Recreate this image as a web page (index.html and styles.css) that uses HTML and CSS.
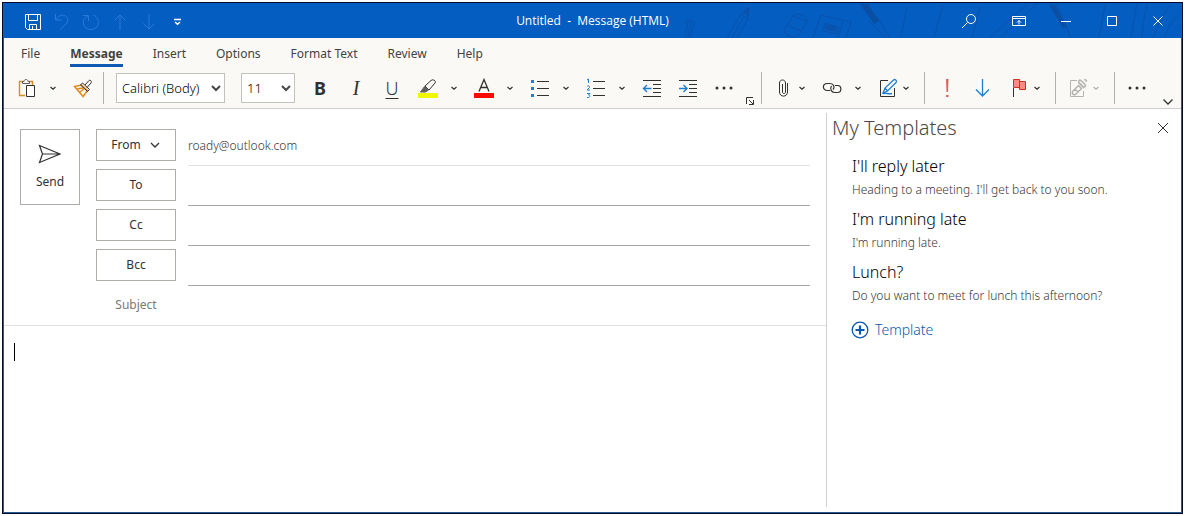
FILE: index.html
```html
<!DOCTYPE html>
<html lang="en">
<head>
<meta charset="utf-8">
<title>Untitled - Message (HTML)</title>
<link rel="stylesheet" href="styles.css">
</head>
<body>
<svg class="defs" aria-hidden="true">
  <symbol id="chev" viewBox="0 0 16 16"><path d="M5.500 7l2.500 2.200L10.500 7" fill="none" stroke="currentColor" stroke-width="1.200"/></symbol>
</svg>
<div class="window">
  <header class="titlebar">
    <svg class="deco" viewBox="0 0 500 35" width="500" height="35" aria-hidden="true">
      <g fill="none" stroke="#0a52ac" stroke-width="1">
        <path d="M3 20l5-3 6 2M7 18l-3 17M10 19l-3 16M13 20l-4 15"/>
        <path d="M46 35l14-24 8-7-1 12-11 19M60 11l7 5M51 35l12-22"/><path d="M63 9l5-5-1 9z" fill="#0a52ac"/>
        <path d="M103 27l9-14 14 5-8 14c-4 4-16 1-15-5zM112 13c4-4 14-1 14 5M107 22l13 6"/>
        <path d="M132 35l8-23 30 7-5 16M162 18l-5 17M144 20l14 4-2 7-14-3z"/><path d="M145 22l10 2-1 4-10-2z" fill="#0a52ac"/>
        <path d="M188 18l16 17M196 14l13 21"/><path d="M179 1h8l11 17-5 3z" fill="#0a4fa4" stroke="none"/>
        <path d="M226 3l-6 32M262 2l-9 33M299 4l-8 31M345 2c-12 12-28 24-36 33M356 0c-12 14-28 25-36 35M375 0l15 35M370 0l12 25M424 2l-6 33M456 0l-6 35M466 1c-2 8-4 20-5 34M490 2c-10 12-14 23-18 33M498 12c-8 6-12 14-14 23"/>
        <path d="M368 2h6l12 22-4 1z" fill="#0a4fa4" stroke="none"/>
      </g>
    </svg>
    <div class="quick">
      <button class="tb" aria-label="Save"><svg width="18" height="18" viewBox="0 0 18 18"><path d="M1.500 1.500h15v15h-13l-2-2zM4.500 1.500v6h9v-6M5.500 16.500v-5h7v5M8.500 13v3" /></svg></button>
      <button class="tb dim" aria-label="Undo"><svg width="18" height="18" viewBox="0 0 18 18"><path d="M2.500 1v6h6M3 6.500C6 2 10 1 13 3.500c3 3 2 6-1 8.500l-5 4.500"/></svg></button>
      <button class="tb dim" aria-label="Redo"><svg width="18" height="18" viewBox="0 0 18 18"><path d="M1 2.500h5.500v5.500M6 3C1 5 0 10 3 14c4 4 10 3 12.500-1 2-4 .5-9-4-11"/></svg></button>
      <button class="tb dim" aria-label="Previous item"><svg width="18" height="18" viewBox="0 0 18 18"><path d="M9 17V2M3.500 7.500L9 2l5.500 5.500"/></svg></button>
      <button class="tb dim" aria-label="Next item"><svg width="18" height="18" viewBox="0 0 18 18"><path d="M9 1v15M3.500 10.500L9 16l5.500-5.500"/></svg></button>
      <button class="tb" aria-label="Customize toolbar"><svg width="18" height="18" viewBox="0 0 18 18"><path d="M5 6.500h7M6 9l2.500 2.300L11 9" stroke-width="1.400"/></svg></button>
    </div>
    <h1 class="caption">Untitled&nbsp; -&nbsp; Message (HTML)</h1>
    <div class="controls">
      <button class="wc search" aria-label="Search"><svg width="18" height="18" viewBox="0 0 18 18"><circle cx="11" cy="7" r="4.500"/><path d="M7.500 10.500L2 16"/></svg></button>
      <button class="wc display" aria-label="Ribbon display options"><svg width="18" height="18" viewBox="0 0 18 18"><path d="M2.500 4.500h13v9h-13zM2.500 6.500h13M9 12.500v-4M7 10.500l2-2 2 2"/></svg></button>
      <button class="wc" aria-label="Minimize"><svg width="18" height="18" viewBox="0 0 18 18"><path d="M4 9.500h10"/></svg></button>
      <button class="wc" aria-label="Maximize"><svg width="18" height="18" viewBox="0 0 18 18"><path d="M4.500 4.500h9v9h-9z"/></svg></button>
      <button class="wc" aria-label="Close"><svg width="18" height="18" viewBox="0 0 18 18"><path d="M4.500 4.500l9 9M13.500 4.500l-9 9"/></svg></button>
    </div>
  </header>

  <div class="ribbon">
    <nav class="tabs">
      <a href="#file">File</a>
      <a href="#message" class="active" aria-current="page">Message</a>
      <a href="#insert">Insert</a>
      <a href="#options">Options</a>
      <a href="#format">Format Text</a>
      <a href="#review">Review</a>
      <a href="#help">Help</a>
    </nav>
    <div class="toolbar" role="toolbar" aria-label="Message tools">
      <div class="group clipboard">
        <button class="tool slim" aria-label="Paste"><svg width="20" height="20" viewBox="0 0 20 20"><path d="M8 17.500H2.500v-14H6M12 3.500h3.500V7" stroke="#e08a1e" stroke-width="1.400"/><path d="M5.500 5.500v-2H7C7 .8 11 .8 11 3.500h1.500v2z" stroke="#605e5c"/><path d="M9.500 7.500h8v11h-8z" fill="#fff"/></svg></button>
        <button class="drop" aria-label="Paste options"><svg width="16" height="16"><use href="#chev"/></svg></button>
        <button class="tool slim" aria-label="Format painter"><svg width="20" height="20" viewBox="0 0 20 20"><path d="M1.500 8.500l7-1.500 6 5.500-4.500 6zM4 11l6-1M7 14l4-3" stroke="#e08a1e" stroke-width="1.500"/><path d="M7.500 7l2-2 7 6.500-2 2zM12 7l4-4.500c1-1 3.500 1 2 2.500l-4 4.500"/></svg></button>
      </div>
      <span class="sep"></span>
      <div class="group fonts">
        <span class="pick family"><select aria-label="Font"><option>Calibri (Body)</option></select><svg width="12" height="12" viewBox="0 0 12 12"><path d="M2 4l4 4 4-4"/></svg></span>
        <span class="pick size"><select aria-label="Font size"><option>11</option></select><svg width="12" height="12" viewBox="0 0 12 12"><path d="M2 4l4 4 4-4"/></svg></span>
      </div>
      <div class="group">
        <button class="tool letter bold">B</button>
        <button class="tool letter italic">I</button>
        <button class="tool letter under">U</button>
        <button class="tool" aria-label="Highlight"><svg width="20" height="20" viewBox="0 0 20 20"><path d="M0 15h20v5H0z" fill="#f0f800" stroke="none"/><path d="M7 8l6-5.500c2-1.800 5.500.5 4 2.500l-6 7z"/><path d="M6.500 8.500l4 3.500L7.500 14l-5 0z" fill="#605e5c" stroke="#605e5c"/></svg></button>
        <button class="drop" aria-label="Highlight colours"><svg width="16" height="16"><use href="#chev"/></svg></button>
        <button class="tool" aria-label="Font colour"><svg width="20" height="20" viewBox="0 0 20 20"><path d="M0 15h20v5H0z" fill="#f90b00" stroke="none"/><path d="M5 13.500L10 1.500l5 12M6.500 9.500h7" stroke-width="1.300"/></svg></button>
        <button class="drop" aria-label="Font colours"><svg width="16" height="16"><use href="#chev"/></svg></button>
        <button class="tool" aria-label="Bullets"><svg width="20" height="20" viewBox="0 0 20 20"><path d="M7 3.500h12M7 10.500h12M7 17.500h12"/><path d="M1 2h3v3H1zM1 9h3v3H1zM1 16h3v3H1z" fill="#1e7fd0" stroke="none"/></svg></button>
        <button class="drop" aria-label="Bullet styles"><svg width="16" height="16"><use href="#chev"/></svg></button>
        <button class="tool" aria-label="Numbering"><svg width="20" height="20" viewBox="0 0 20 20"><path d="M7 3.500h12M7 10.500h12M7 17.500h12"/><path d="M1 2L2.500 1v4M1 8.500C1.500 7.500 4 7.500 3.500 9.500L1 12H4M1 15.500h3L2.500 17c2 0 2 3-1.500 2.500" stroke="#1e7fd0"/></svg></button>
        <button class="drop" aria-label="Numbering styles"><svg width="16" height="16"><use href="#chev"/></svg></button>
        <button class="tool" aria-label="Decrease indent"><svg width="20" height="20" viewBox="0 0 20 20"><path d="M1 2.500h18M11 6.500h8M11 10.500h8M11 14.500h8M1 18.500h18"/><path d="M9.500 10.500H2M5 7l-3.500 3.500L5 14" stroke="#1e7fd0" stroke-width="1.400"/></svg></button>
        <button class="tool" aria-label="Increase indent"><svg width="20" height="20" viewBox="0 0 20 20"><path d="M1 2.500h18M11 6.500h8M11 10.500h8M11 14.500h8M1 18.500h18"/><path d="M1 10.500h7.500M5.500 7L9 10.500 5.500 14" stroke="#1e7fd0" stroke-width="1.400"/></svg></button>
        <button class="tool" aria-label="More formatting"><svg width="20" height="20" viewBox="0 0 20 20"><g fill="#323130" stroke="none"><circle cx="3" cy="10" r="1.500"/><circle cx="10" cy="10" r="1.500"/><circle cx="17" cy="10" r="1.500"/></g></svg></button>
        <button class="launch" aria-label="Font dialog"><svg width="10" height="10" viewBox="0 0 10 10"><path d="M1.500 8V1.500H8M4 4l4 4M8.500 4v4.500H4"/></svg></button>
      </div>
      <span class="sep"></span>
      <div class="group attach">
        <button class="tool slim" aria-label="Attach file"><svg width="20" height="20" viewBox="0 0 20 20"><path d="M8.500 6v8c0 2 3 2 3 0V5c0-4-6-4-6 0v9c0 5.500 8 5.500 8 0V5"/></svg></button>
        <button class="drop" aria-label="Attach options"><svg width="16" height="16"><use href="#chev"/></svg></button>
        <button class="tool" aria-label="Link"><svg width="20" height="20" viewBox="0 0 20 20"><path d="M8 12.500H5.500C0 12.500 0 5.500 5.500 5.500H8c4 0 5 4 3 6M9.500 8c-2 3 0 6.500 3 6.500h3c4.500 0 4.500-7 0-7H13" stroke-width="1.200"/></svg></button>
        <button class="drop" aria-label="Link options"><svg width="16" height="16"><use href="#chev"/></svg></button>
        <button class="tool slim apart" aria-label="Signature"><svg width="20" height="20" viewBox="0 0 20 20"><path d="M10 2.500H2.500v16h14V10"/><path d="M5 15l2-5 8.500-8c1.500-1.500 4 1 2.500 2.500L9.500 13zM7 10l2.500 3M5 15.500c4-1 5 1 9 0" stroke="#1e7fd0" stroke-width="1.300"/></svg></button>
        <button class="drop" aria-label="Signature options"><svg width="16" height="16"><use href="#chev"/></svg></button>
      </div>
      <span class="sep"></span>
      <div class="group marks">
        <button class="tool" aria-label="High importance"><svg width="20" height="20" viewBox="0 0 20 20"><path d="M9 1h2.500l-.5 13h-1.500zM9 17h2.500v2H9z" fill="#d9655a" stroke="none"/></svg></button>
        <button class="tool" aria-label="Low importance"><svg width="20" height="20" viewBox="0 0 20 20"><path d="M9.500 1v17M3 11.500l6.500 6.500 6.500-6.500" stroke="#1e7fd0" stroke-width="1.300"/></svg></button>
        <button class="tool slim apart" aria-label="Follow up"><svg width="20" height="20" viewBox="0 0 20 20"><path d="M4.500 10v9"/><path d="M4.500 1.500h6v2h6v8h-6v-2h-6z" fill="#ff8a84" stroke="#d13020"/><path d="M10.500 3v7" stroke="#d13020"/></svg></button>
        <button class="drop" aria-label="Follow up options"><svg width="16" height="16"><use href="#chev"/></svg></button>
      </div>
      <span class="sep"></span>
      <div class="group attach">
        <button class="tool slim off" disabled aria-label="View templates"><svg width="20" height="20" viewBox="0 0 20 20"><g stroke="#b5b3b1"><path d="M9 2.500H2.500v16h13V13"/><path d="M4.500 13.500l6-6 3 3-6 6c-2 1-4-1-3-3zM7 11l3 3M10.500 4.500l5.500 5.500M13 2.500l4 4c1.500 2-1 3-2 2l-4-4c-1-1.500.5-3 2-2zM16.500 1l2.500 2.500" stroke-width="1.500"/></g></svg></button>
        <button class="drop off" disabled aria-label="Template options"><svg width="16" height="16"><use href="#chev"/></svg></button>
      </div>
      <span class="sep"></span>
      <div class="group marks"><button class="tool" aria-label="More commands"><svg width="20" height="20" viewBox="0 0 20 20"><g fill="#323130" stroke="none"><circle cx="3" cy="10" r="1.500"/><circle cx="10" cy="10" r="1.500"/><circle cx="17" cy="10" r="1.500"/></g></svg></button></div>
      <button class="collapse" aria-label="Collapse ribbon"><svg width="12" height="8" viewBox="0 0 12 8"><path d="M1.500 1.500L6 6l4.500-4.500" stroke-width="1.300"/></svg></button>
    </div>
  </div>

  <main class="content">
    <section class="compose">
      <form class="head">
        <button type="button" class="box send"><svg width="24" height="20" viewBox="0 0 24 20"><path d="M1.500 1.500L22 10 1.500 18.500 4.500 10zM4.500 10H22" stroke-width="1.200"/></svg>Send</button>
        <div class="rows">
          <div class="row"><button type="button" class="box" id="from">From<svg width="12" height="12" viewBox="0 0 12 12"><path d="M2 4l4 4 4-4" stroke-width="1.300"/></svg></button><input class="faint" aria-labelledby="from" value="roady@outlook.com"></div>
          <div class="row"><button type="button" class="box" id="to">To</button><input aria-labelledby="to"></div>
          <div class="row"><button type="button" class="box" id="cc">Cc</button><input aria-labelledby="cc"></div>
          <div class="row"><button type="button" class="box" id="bcc">Bcc</button><input aria-labelledby="bcc"></div>
          <div class="row"><label for="subject">Subject</label><input class="bare" id="subject"></div>
        </div>
      </form>
      <div class="editor"><textarea aria-label="Message body"></textarea><span class="caret"></span></div>
    </section>
    <aside class="pane">
      <div class="pane-head"><h2>My Templates</h2><button aria-label="Close pane"><svg width="12" height="12" viewBox="0 0 12 12"><path d="M1 1l10 10M11 1L1 11"/></svg></button></div>
      <ul class="templates">
        <li><h3>I'll reply later</h3><p>Heading to a meeting. I'll get back to you soon.</p></li>
        <li><h3>I'm running late</h3><p>I'm running late.</p></li>
        <li><h3>Lunch?</h3><p>Do you want to meet for lunch this afternoon?</p></li>
      </ul>
      <button class="add"><svg width="18" height="18" viewBox="0 0 18 18"><circle cx="9" cy="9" r="7.800" stroke-width="1.300"/><path d="M9 4.500v9M4.500 9h9" stroke-width="2.200"/></svg>Template</button>
    </aside>
  </main>
</div>
</body>
</html>
```
FILE: styles.css
```css
* { box-sizing: border-box; }
html, body { height: 100%; }
body {
  margin: 0;
  padding: 2px;
  background: #fff;
  color: #323130;
  font: 12px/16px "Noto Sans", "Open Sans", sans-serif;
}
button, input, select, textarea { font: inherit; color: inherit; margin: 0; padding: 0; border: 0; background: none; }
svg { fill: none; stroke: currentColor; display: block; flex: none; }
h1, h2, h3, p, ul { margin: 0; padding: 0; font-weight: 400; }
.defs { position: absolute; width: 0; height: 0; }

.window {
  min-height: 100%;
  display: flex;
  flex-direction: column;
  border: 1px solid #050a28;
  box-shadow: inset 0 0 0 1px #245c92;
  padding: 0 1px 1px;
}

.titlebar {
  position: relative;
  display: grid;
  grid-template-columns: 1fr auto 1fr;
  align-items: center;
  height: 35px;
  background: #045dc1;
  color: #fff;
}
.deco { position: absolute; right: 0; top: 0; }
.quick, .controls { position: relative; display: flex; align-items: center; }
.quick { padding-left: 14px; }
.tb { width: 29px; height: 35px; display: grid; place-items: center; padding-top: 3px; }
.dim { color: #2a7ad8; }
.caption { font-size: 12px; font-family: "Open Sans", sans-serif; position: relative; }
.controls { justify-content: flex-end; }
.wc { width: 46px; height: 35px; display: grid; place-items: center; }
.wc.display { width: 48px; }
.wc.search { width: 52px; }

.ribbon { background: #faf9f6; border-bottom: 1px solid #cfcdca; }
.tabs { display: flex; gap: 30px; padding: 7px 17px 0; }
.tabs a { color: #444240; text-decoration: none; padding-bottom: 1px; line-height: 18px; border-bottom: 3px solid transparent; }
.tabs .active { font-weight: 700; border-color: #0e59b4; }

.toolbar { display: flex; align-items: center; height: 41px; }
.group { display: flex; align-items: center; }
.tool { width: 36px; height: 32px; display: grid; place-items: center; }
.slim { width: 20px; }
.apart { margin-left: 8px; }
.drop { width: 20px; height: 32px; display: flex; align-items: center; }
.clipboard { padding: 0 10px 0 13px; gap: 8px; }
.sep { width: 1px; height: 32px; background: #b3b1ae; flex: none; }
.fonts { gap: 16px; padding: 0 7px 0 12px; }
.pick { display: grid; align-items: center; height: 30px; border: 1px solid #c4c2bf; background: #fff; }
.pick select { grid-area: 1 / 1; appearance: none; width: 100%; height: 28px; padding-left: 5px; font-size: 13px; font-weight: 300; color: #000; }
.pick svg { grid-area: 1 / 1; justify-self: end; margin-right: 2px; stroke: #484644; stroke-width: 2; pointer-events: none; }
.family { width: 109px; }
.size { width: 54px; }
.letter { font-size: 18px; line-height: 24px; }
.bold { font-weight: 700; }
.italic { font-family: "Liberation Serif", serif; font-style: italic; font-size: 20px; }
.under { text-decoration: underline; text-decoration-thickness: 1px; text-underline-offset: 3px; font-weight: 300; }
.launch { width: 19px; height: 36px; padding-left: 3px; display: grid; place-items: end start; }
.attach { padding: 0 6px 0 12px; }
.marks { padding: 0 6px 0 4px; }
.off { color: #b5b3b1; }
.collapse { margin-left: auto; margin-right: 7px; height: 36px; display: grid; align-items: end; }

.content { flex: 1; display: flex; }
.compose { flex: 1; min-width: 0; display: flex; flex-direction: column; }
.head { display: flex; gap: 16px; padding: 17px 16px 0; border-bottom: 1px solid #e3e1df; }
.box { display: flex; align-items: center; justify-content: center; gap: 8px; border: 1px solid #b0ada9; background: #fff; }
.send { width: 60px; height: 76px; margin-top: 3px; flex-direction: column; gap: 10px; }
.rows { flex: 1; min-width: 0; }
.row { display: grid; grid-template-columns: 80px 1fr; column-gap: 12px; height: 40px; }
.row .box { height: 32px; margin-top: 3px; }
.row label { text-align: center; color: #797775; line-height: 38px; }
.row input { width: 100%; border-bottom: 1px solid #a8a6a3; outline: 0; }
.row .faint { border-color: #e3e1df; color: #383634; font-weight: 300; }
.row .bare { border: 0; }
.rows .row:last-child { height: 39px; }
.editor { position: relative; flex: 1; display: flex; }
.editor textarea { flex: 1; resize: none; padding: 16px 10px; outline: 0; }
.caret { position: absolute; left: 10px; top: 17px; width: 1px; height: 18px; background: #000; }

.pane { width: 355px; margin: 4px 0 5px; padding-left: 5px; border-left: 1px solid #d2d0ce; }
.pane-head { display: flex; align-items: center; justify-content: space-between; padding: 0 12px 0 0; }
.pane-head h2 { font-size: 20px; line-height: 30px; font-weight: 300; color: #4a4846; }
.templates { list-style: none; padding: 11px 20px 0; }
.templates li { height: 53px; }
.templates h3 { font-size: 16px; line-height: 24px; font-weight: 300; color: #000; }
.templates p { font-size: 12px; line-height: 24px; font-weight: 300; color: #383634; }
.add { display: flex; align-items: center; gap: 6px; margin: 8px 19px; color: #0858b0; font-size: 14px; line-height: 18px; font-weight: 300; }
```
